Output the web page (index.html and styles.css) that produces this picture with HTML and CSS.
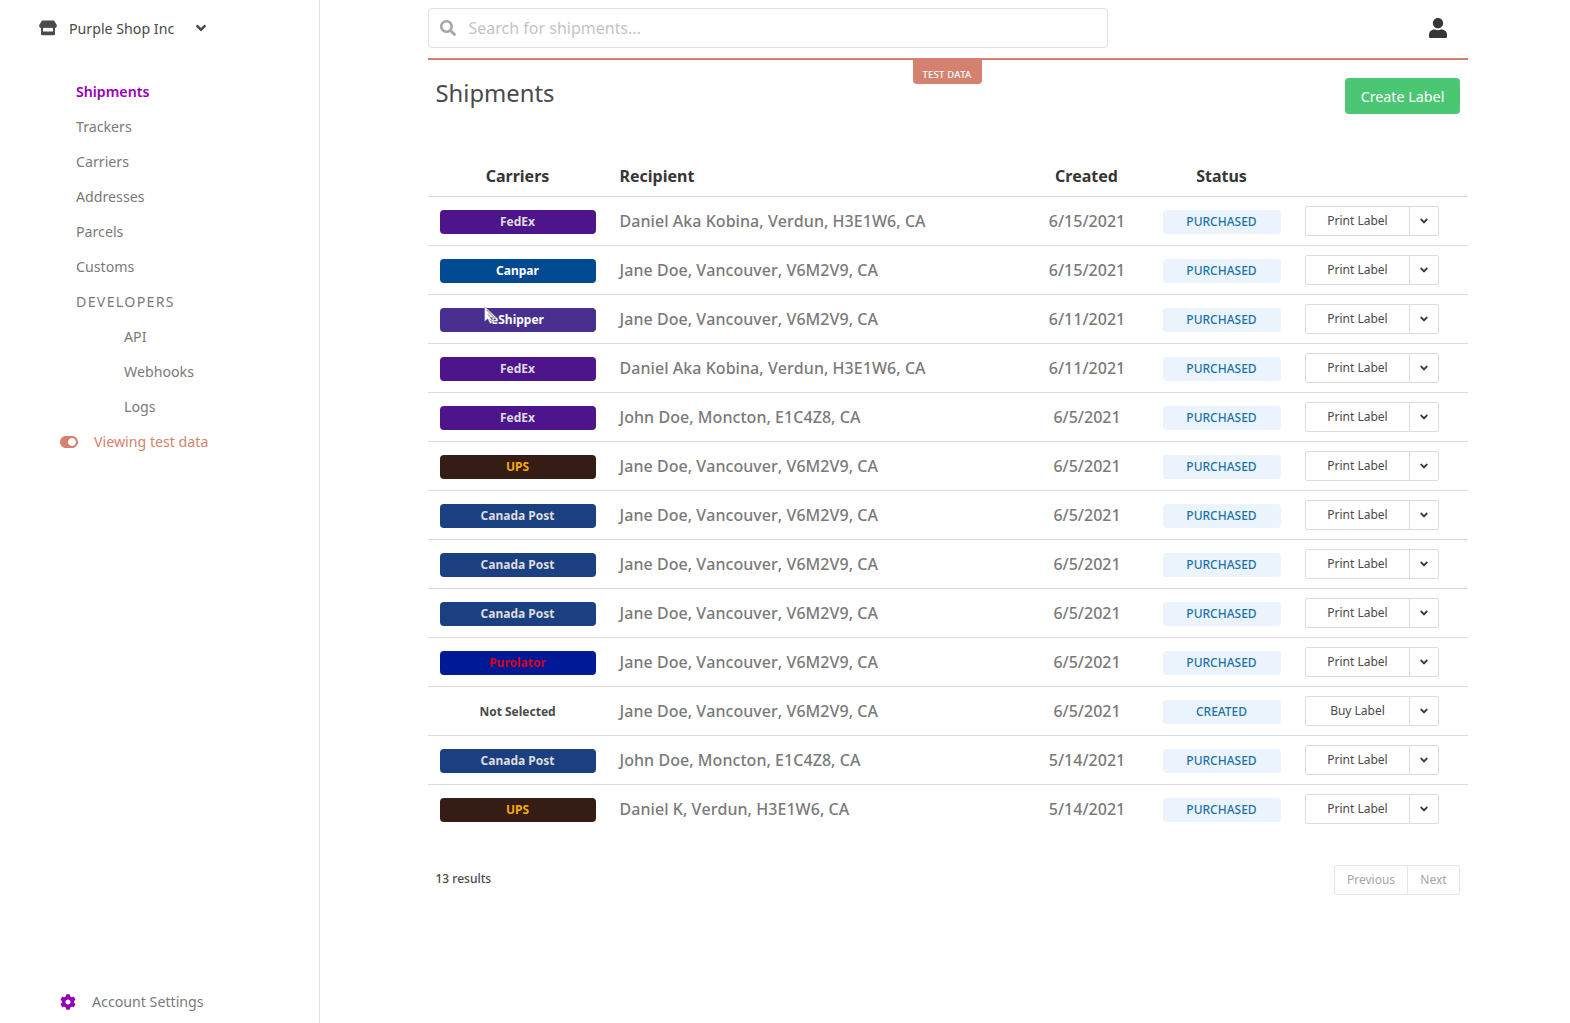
FILE: index.html
```html
<!DOCTYPE html>
<html lang="en">
<head>
<meta charset="utf-8">
<title>Shipments</title>
<link rel="stylesheet" href="styles.css">
</head>
<body>
<svg class="sprite" aria-hidden="true">
  <symbol id="angle" viewBox="0 0 320 512"><path d="M143 352.3L7 216.3c-9.4-9.4-9.4-24.6 0-33.9l22.6-22.6c9.4-9.4 24.6-9.4 33.9 0l96.4 96.4 96.4-96.4c9.4-9.4 24.6-9.4 33.9 0l22.6 22.6c9.4 9.4 9.4 24.6 0 33.9l-136 136c-9.2 9.4-24.4 9.4-33.8 0z"/></symbol>
</svg>
<div class="app">
  <aside class="sidebar">
    <div class="brand">
      <svg class="icon-store" viewBox="0 0 18 16"><path d="M3 .5h12l2.6 4.2c.7 1.7-.2 3.2-1.6 3.4V14c0 .8-.5 1.300-1.300 1.300H3.300c-.8 0-1.300-.5-1.300-1.300V8.100C.6 7.900-.3 6.400.400 4.700zM4 8.200v3.300h10V8.200c-1 0-1.700-.3-2.300-.8-.7.9-2 .9-2.700 0-.7.9-2 .9-2.700 0-.6.5-1.300.8-2.300.8z"/></svg>
      <span class="brand-name">Purple Shop Inc</span>
      <svg class="icon-angle"><use href="#angle"/></svg>
    </div>
    <nav class="menu">
      <a class="item active">Shipments</a>
      <a class="item">Trackers</a>
      <a class="item">Carriers</a>
      <a class="item">Addresses</a>
      <a class="item">Parcels</a>
      <a class="item">Customs</a>
      <span class="item group">DEVELOPERS</span>
      <a class="item sub">API</a>
      <a class="item sub">Webhooks</a>
      <a class="item sub">Logs</a>
      <a class="item mode"><svg class="icon-toggle" viewBox="0 64 576 384"><path d="M384 64H192C86 64 0 150 0 256s86 192 192 192h192c106 0 192-86 192-192S490 64 384 64zm0 320c-70.800 0-128-57.300-128-128 0-70.800 57.300-128 128-128 70.800 0 128 57.300 128 128 0 70.800-57.300 128-128 128z"/></svg>Viewing test data</a>
    </nav>
    <a class="item settings"><svg class="icon-cog" viewBox="0 0 512 512"><path d="M487.400 315.700l-42.600-24.600c4.300-23.200 4.300-47 0-70.200l42.600-24.600c4.900-2.800 7.100-8.600 5.500-14-11.100-35.600-30-67.800-54.700-94.600-3.800-4.100-10-5.100-14.800-2.300L380.800 110c-17.900-15.400-38.500-27.300-60.800-35.100V25.800c0-5.600-3.900-10.500-9.400-11.700-36.700-8.200-74.300-7.800-109.200 0-5.500 1.200-9.400 6.100-9.400 11.700V75c-22.200 7.900-42.800 19.800-60.800 35.100L88.700 85.500c-4.900-2.800-11-1.900-14.800 2.300-24.700 26.700-43.600 58.900-54.700 94.600-1.700 5.400.6 11.200 5.500 14L67.300 221c-4.300 23.200-4.300 47 0 70.200l-42.600 24.600c-4.900 2.800-7.100 8.600-5.500 14 11.100 35.600 30 67.800 54.700 94.600 3.800 4.100 10 5.100 14.800 2.300l42.600-24.600c17.900 15.400 38.500 27.300 60.800 35.100v49.200c0 5.600 3.900 10.500 9.400 11.700 36.700 8.200 74.300 7.800 109.200 0 5.500-1.200 9.400-6.100 9.400-11.700v-49.200c22.200-7.900 42.800-19.800 60.800-35.100l42.600 24.600c4.900 2.800 11 1.900 14.800-2.300 24.700-26.700 43.600-58.900 54.700-94.600 1.500-5.500-.7-11.300-5.600-14.100zM256 336c-44.100 0-80-35.900-80-80s35.900-80 80-80 80 35.900 80 80-35.900 80-80 80z"/></svg>Account Settings</a>
  </aside>
  <main class="main">
    <header class="topbar">
      <div class="search">
        <svg class="icon-search" viewBox="0 0 512 512"><path d="M505 442.700L405.300 343c-4.500-4.500-10.600-7-17-7H372c27.600-35.300 44-79.700 44-128C416 93.100 322.900 0 208 0S0 93.100 0 208s93.100 208 208 208c48.300 0 92.700-16.400 128-44v16.300c0 6.400 2.500 12.500 7 17l99.700 99.700c9.400 9.400 24.600 9.400 33.900 0l28.300-28.300c9.400-9.400 9.400-24.600.1-34zM208 336c-70.700 0-128-57.200-128-128 0-70.700 57.200-128 128-128 70.700 0 128 57.200 128 128 0 70.700-57.200 128-128 128z"/></svg>
        <span>Search for shipments...</span>
      </div>
      <svg class="icon-user" viewBox="0 0 448 512" preserveAspectRatio="none"><path d="M224 256c70.700 0 128-57.300 128-128S294.700 0 224 0 96 57.300 96 128s57.300 128 128 128zm89.600 32h-16.700c-22.200 10.200-46.900 16-72.900 16s-50.600-5.800-72.900-16h-16.700C60.200 288 0 348.200 0 422.400V464c0 26.500 21.500 48 48 48h352c26.500 0 48-21.500 48-48v-41.600c0-74.200-60.200-134.400-134.400-134.400z"/></svg>
    </header>
    <div class="test-line"><span class="test-tag">TEST DATA</span></div>
    <div class="heading">
      <h1 class="title">Shipments</h1>
      <button class="create">Create Label</button>
    </div>
    <table class="table">
      <colgroup><col class="c-carrier"><col class="c-recipient"><col class="c-created"><col class="c-status"><col class="c-action"></colgroup>
      <thead><tr><th>Carriers</th><th class="left">Recipient</th><th>Created</th><th>Status</th><th></th></tr></thead>
      <tbody>
        <tr><td><span class="tag fedex">FedEx</span></td><td class="left">Daniel Aka Kobina, Verdun, H3E1W6, CA</td><td>6/15/2021</td><td><span class="tag status">PURCHASED</span></td><td><div class="actions"><span class="act">Print Label</span><span class="drop"><svg><use href="#angle"/></svg></span></div></td></tr>
        <tr><td><span class="tag canpar">Canpar</span></td><td class="left">Jane Doe, Vancouver, V6M2V9, CA</td><td>6/15/2021</td><td><span class="tag status">PURCHASED</span></td><td><div class="actions"><span class="act">Print Label</span><span class="drop"><svg><use href="#angle"/></svg></span></div></td></tr>
        <tr><td><span class="tag eshipper">eShipper<svg class="pointer" viewBox="0 0 12 18"><path class="pointer-edge" d="M.5 .5v14l3-2.500 2 4.500 2.500-1-2-4.500h5.500z"/><path class="pointer-hatch" d="M2 3.500l7 7M3.500 8l6 6M5.500 13l2 2"/></svg></span></td><td class="left">Jane Doe, Vancouver, V6M2V9, CA</td><td>6/11/2021</td><td><span class="tag status">PURCHASED</span></td><td><div class="actions"><span class="act">Print Label</span><span class="drop"><svg><use href="#angle"/></svg></span></div></td></tr>
        <tr><td><span class="tag fedex">FedEx</span></td><td class="left">Daniel Aka Kobina, Verdun, H3E1W6, CA</td><td>6/11/2021</td><td><span class="tag status">PURCHASED</span></td><td><div class="actions"><span class="act">Print Label</span><span class="drop"><svg><use href="#angle"/></svg></span></div></td></tr>
        <tr><td><span class="tag fedex">FedEx</span></td><td class="left">John Doe, Moncton, E1C4Z8, CA</td><td>6/5/2021</td><td><span class="tag status">PURCHASED</span></td><td><div class="actions"><span class="act">Print Label</span><span class="drop"><svg><use href="#angle"/></svg></span></div></td></tr>
        <tr><td><span class="tag ups">UPS</span></td><td class="left">Jane Doe, Vancouver, V6M2V9, CA</td><td>6/5/2021</td><td><span class="tag status">PURCHASED</span></td><td><div class="actions"><span class="act">Print Label</span><span class="drop"><svg><use href="#angle"/></svg></span></div></td></tr>
        <tr><td><span class="tag canadapost">Canada Post</span></td><td class="left">Jane Doe, Vancouver, V6M2V9, CA</td><td>6/5/2021</td><td><span class="tag status">PURCHASED</span></td><td><div class="actions"><span class="act">Print Label</span><span class="drop"><svg><use href="#angle"/></svg></span></div></td></tr>
        <tr><td><span class="tag canadapost">Canada Post</span></td><td class="left">Jane Doe, Vancouver, V6M2V9, CA</td><td>6/5/2021</td><td><span class="tag status">PURCHASED</span></td><td><div class="actions"><span class="act">Print Label</span><span class="drop"><svg><use href="#angle"/></svg></span></div></td></tr>
        <tr><td><span class="tag canadapost">Canada Post</span></td><td class="left">Jane Doe, Vancouver, V6M2V9, CA</td><td>6/5/2021</td><td><span class="tag status">PURCHASED</span></td><td><div class="actions"><span class="act">Print Label</span><span class="drop"><svg><use href="#angle"/></svg></span></div></td></tr>
        <tr><td><span class="tag purolator">Purolator</span></td><td class="left">Jane Doe, Vancouver, V6M2V9, CA</td><td>6/5/2021</td><td><span class="tag status">PURCHASED</span></td><td><div class="actions"><span class="act">Print Label</span><span class="drop"><svg><use href="#angle"/></svg></span></div></td></tr>
        <tr><td><span class="tag">Not Selected</span></td><td class="left">Jane Doe, Vancouver, V6M2V9, CA</td><td>6/5/2021</td><td><span class="tag status">CREATED</span></td><td><div class="actions"><span class="act">Buy Label</span><span class="drop"><svg><use href="#angle"/></svg></span></div></td></tr>
        <tr><td><span class="tag canadapost">Canada Post</span></td><td class="left">John Doe, Moncton, E1C4Z8, CA</td><td>5/14/2021</td><td><span class="tag status">PURCHASED</span></td><td><div class="actions"><span class="act">Print Label</span><span class="drop"><svg><use href="#angle"/></svg></span></div></td></tr>
        <tr><td><span class="tag ups">UPS</span></td><td class="left">Daniel K, Verdun, H3E1W6, CA</td><td>5/14/2021</td><td><span class="tag status">PURCHASED</span></td><td><div class="actions"><span class="act">Print Label</span><span class="drop"><svg><use href="#angle"/></svg></span></div></td></tr>
      </tbody>
    </table>
    <footer class="footer">
      <span class="count">13 results</span>
      <div class="pager"><span class="prev">Previous</span><span class="next">Next</span></div>
    </footer>
  </main>
</div>
</body>
</html>
```
FILE: styles.css
```css
* { box-sizing: border-box; }
body { margin: 0; background: #fff; color: #4a4a4a; font: 16px/24px "Noto Sans", sans-serif; }
svg { display: block; fill: currentColor; flex: none; }
.sprite { width: 0; height: 0; position: absolute; }
.app { display: flex; height: 1023px; overflow: hidden; }

.sidebar { width: 320px; border-right: 1px solid #e2e2e2; display: flex; flex-direction: column; }
.brand { display: flex; align-items: center; height: 56px; padding-left: 39px; }
.icon-store { width: 18px; height: 16px; }
.brand-name { margin-left: 12px; width: 127px; padding-top: 1px; font-size: 14.2px; }
.icon-angle { width: 10px; height: 16px; }
.menu { padding-top: 18px; flex: 1; }
.item { display: flex; align-items: center; height: 35px; padding-left: 76px; font-size: 14.2px; color: #7a7a7a; }
.active { color: #9600b4; font-weight: 600; }
.group { letter-spacing: 1.3px; }
.sub { padding-left: 124px; }
.mode { padding-left: 60px; color: #d5816f; }
.icon-toggle { width: 18px; height: 12px; margin-right: 16px; }
.settings { padding-left: 60px; margin-bottom: 4px; }
.icon-cog { width: 16px; height: 16px; margin-right: 16px; color: #9600b4; }

.main { width: 1040px; margin-left: 108px; }
.topbar { display: flex; align-items: center; justify-content: space-between; height: 58px; padding: 0 20px 2px 0; }
.search { display: flex; align-items: center; width: 680px; height: 40px; border: 1px solid #e2e2e2; border-radius: 4px; padding-left: 11px; color: #c4c4c4; }
.icon-search { width: 16px; height: 16px; margin-right: 12.5px; color: #a6a6a6; }
.icon-user { width: 18px; height: 20.5px; color: #363636; margin-right: 0.7px; }
.test-line { display: flex; justify-content: center; align-items: flex-start; height: 20px; border-top: 2px solid #d5816f; }
.test-tag { width: 69px; height: 24px; padding: 3px 1px 0 0; margin-right: 1px; text-align: center; background: #d5816f; border-radius: 0 0 4px 4px; color: #fff; font-size: 9.6px; font-weight: 500; letter-spacing: 0.2px; }
.heading { display: flex; justify-content: space-between; align-items: flex-start; height: 78px; padding: 0 8px; }
.title { margin: 2px 0 0 -0.5px; font-size: 23.8px; line-height: 27px; font-weight: 400; }
.create { width: 115px; height: 36px; border: 0; padding: 0; border-radius: 4px; background: #4bc774; color: #fff; font: 14.3px "Noto Sans", sans-serif; }

.table { width: 1040px; table-layout: fixed; border-collapse: separate; border-spacing: 0; }
.c-carrier { width: 180px; }
.c-recipient { width: 415px; }
.c-created { width: 128px; }
.c-status { width: 142px; }
.c-action { width: 175px; }
th { height: 41px; padding: 0 13px 0 12px; color: #363636; font-weight: 700; border-bottom: 1px solid #dbdbdb; }
td { height: 49px; padding: 0 12px; text-align: center; color: #7a7a7a; font-weight: 500; border-bottom: 1px solid #dbdbdb; }
tbody tr:last-child td { border-bottom-color: transparent; }
.table .left { padding-left: 11.5px; text-align: left; font-kerning: none; }
.table td.left { letter-spacing: 0.05px; }
.tag { display: flex; position: relative; top: 0.5px; align-items: center; justify-content: center; height: 24px; padding-right: 1px; border-radius: 4px; font-size: 12px; font-weight: 700; color: #4a4a4a; }
.fedex { background: #4d148c; color: #ddd; }
.canpar { background: #004a91; color: #fff; }
.eshipper { background: #482f90; color: #fff; }
.ups { background: #351c15; color: #f5ab00; }
.canadapost { background: #1b4082; color: #ddd; }
.purolator { background: #001996; color: #d0021b; }
.status { background: #ebf4fc; color: #1d72aa; font-weight: 500; }
.pointer { position: absolute; left: 44px; top: -2px; width: 13px; height: 19px; }
.pointer-edge { fill: #fff; stroke: #8a80a8; stroke-width: .4; }
.pointer-hatch { fill: none; stroke: #555; stroke-width: .8; }
.actions { display: flex; height: 30px; width: 134px; border: 1px solid #dbdbdb; border-radius: 2px; color: #4a4a4a; font-size: 12px; line-height: 27px; font-weight: 400; }
.act { width: 103px; }
.drop { flex: 1; display: flex; align-items: center; justify-content: center; border-left: 1px solid #dbdbdb; }
.drop svg { width: 8px; height: 12px; color: #363636; }

.footer { display: flex; align-items: center; justify-content: space-between; margin-top: 31px; height: 30px; padding: 0 8px; font-size: 12px; }
.count { font-weight: 500; margin-bottom: 2px; margin-left: -0.5px; }
.pager { display: flex; height: 30px; border: 1px solid #e5e5e5; border-radius: 2px; line-height: 27px; color: #a5a5a5; text-align: center; }
.prev { width: 72px; }
.next { width: 52px; border-left: 1px solid #e5e5e5; }
```
